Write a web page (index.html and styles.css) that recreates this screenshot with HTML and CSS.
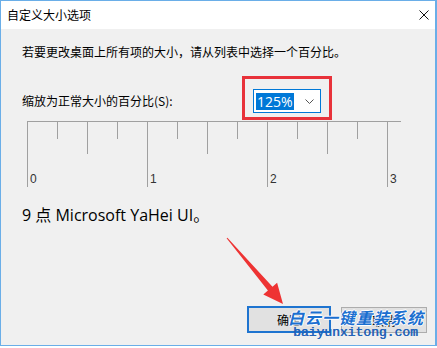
FILE: index.html
```html
<!DOCTYPE html>
<html>
    <head>
        <meta charset="utf-8">
        <title>自定义大小选项</title>
        <link rel="stylesheet" href="styles.css">
    </head>
    <body>
        <div class="window">
            <div class="titlebar">
                <span class="title">自定义大小选项</span>
                <svg class="close" width="10" height="10" viewBox="0 0 10 10">
                    <path d="M0.5 0.5 L9.5 9.5 M9.5 0.5 L0.5 9.5" stroke="#111" stroke-width="1" fill="none"/>
                </svg>
            </div>
            <div class="content">
                <div class="intro">若要更改桌面上所有项的大小，请从列表中选择一个百分比。</div>
                <div class="scale-row">
                    <span class="scale-label">缩放为正常大小的百分比(S):</span>
                    <div class="combo">
                        <span class="combo-value">125%</span>
                        <svg class="chevron" width="9" height="5" viewBox="0 0 9 5">
                            <path d="M0.5 0.5 L4.5 4.5 L8.5 0.5" stroke="#555" stroke-width="1" fill="none"/>
                        </svg>
                        <div class="mark"></div>
                    </div>
                </div>
                <svg class="ruler" width="374" height="68" viewBox="0 0 374 68">
                    <g stroke="#a0a0a0" stroke-width="1">
                        <line x1="0" y1="0.5" x2="374" y2="0.5"/>
                        <line x1="0.5" y1="0" x2="0.5" y2="66"/>
                        <line x1="30.5" y1="0" x2="30.5" y2="18"/>
                        <line x1="60.5" y1="0" x2="60.5" y2="33"/>
                        <line x1="90.5" y1="0" x2="90.5" y2="18"/>
                        <line x1="120.5" y1="0" x2="120.5" y2="66"/>
                        <line x1="150.5" y1="0" x2="150.5" y2="18"/>
                        <line x1="180.5" y1="0" x2="180.5" y2="33"/>
                        <line x1="210.5" y1="0" x2="210.5" y2="18"/>
                        <line x1="240.5" y1="0" x2="240.5" y2="66"/>
                        <line x1="270.5" y1="0" x2="270.5" y2="18"/>
                        <line x1="300.5" y1="0" x2="300.5" y2="33"/>
                        <line x1="330.5" y1="0" x2="330.5" y2="18"/>
                        <line x1="360.5" y1="0" x2="360.5" y2="66"/>
                    </g>
                    <g class="ruler-num">
                        <text x="3" y="62">0</text>
                        <text x="123" y="62">1</text>
                        <text x="243" y="62">2</text>
                        <text x="363" y="62">3</text>
                    </g>
                </svg>
                <div class="sample">9 点 Microsoft YaHei UI。</div>
                <div class="buttons">
                    <button class="btn btn-default">确定</button>
                    <button class="btn">取消</button>
                </div>
            </div>
            <svg class="arrow" width="437" height="348" viewBox="0 0 437 348">
                <polygon points="226.6,238.3 267.9,290.5 263.3,294.4 283,304 277.1,282.8 272.5,286.7 227.4,237.7" fill="#ee3333"/>
            </svg>
            <div class="watermark">
                <div class="wm-name">白云一键重装系统</div>
                <div class="wm-url">baiyunxitong.com</div>
            </div>
        </div>
    </body>
</html>
```

FILE: styles.css
```css
body { margin: 0; background: #fff; font-family: "Noto Sans CJK SC", sans-serif; color: #000; }
.window { position: relative; width: 437px; height: 346px; box-sizing: border-box; border: 1px solid #6aaee8; border-right-width: 2px; background: #f0f0f0; overflow: hidden; }
.titlebar { height: 28px; background: #fff; display: flex; align-items: center; justify-content: space-between; padding: 0 6px 0 6px; }
.title { font-size: 12px; line-height: 16px; }
.close { margin-top: 0; }
.content { padding: 15px 0 0 21px; }
.intro { font-size: 12px; line-height: 16px; }
.scale-row { display: flex; align-items: center; margin-top: 29px; height: 24px; }
.scale-label { width: 231px; font-size: 12px; line-height: 16px; }
.combo { position: relative; width: 68px; height: 24px; box-sizing: border-box; border: 1px solid #0078d7; background: #fff; display: flex; align-items: center; justify-content: space-between; padding: 0 6px 0 2px; }
.combo-value { background: #0078d7; color: #fff; font-family: "Open Sans", sans-serif; font-size: 14px; line-height: 17px; padding: 0 1px; }
.mark { position: absolute; left: -12px; top: -14px; width: 84px; height: 38px; border: 3px solid #e8323a; }
.ruler { display: block; margin: 8px 0 0 5px; }
.ruler-num { font-family: "Liberation Sans", sans-serif; font-size: 12px; fill: #333; }
.sample { margin-top: 16px; font-family: "Open Sans", "Noto Sans CJK SC", sans-serif; font-size: 16px; line-height: 20px; }
.buttons { display: flex; justify-content: flex-end; gap: 10px; margin-top: 81px; padding-right: 8px; align-items: flex-start; }
.btn { font-family: "Noto Sans CJK SC", sans-serif; font-size: 12px; background: #e1e1e1; border: 1px solid #adadad; width: 86px; height: 26px; margin: 1px 0 0 0; padding: 0; color: #000; }
.btn-default { border: 2px solid #1e74d0; width: 84px; height: 27px; margin: 0; }
.arrow { position: absolute; left: -1px; top: -1px; pointer-events: none; }
.watermark { position: absolute; left: 287px; top: 306px; color: #1b6fd0; }
.wm-name { height: 20px; font-size: 16px; line-height: 20px; font-weight: bold; font-style: italic; letter-spacing: 1px; text-shadow: 1px 0 #fff, -1px 0 #fff, 0 1px #fff, 0 -1px #fff; }
.wm-url { height: 14px; font-family: "Liberation Mono", monospace; font-size: 13px; line-height: 14px; margin: -1px 0 0 5px; color: #2262b8; text-shadow: 0.4px 0 #2262b8; }
```
